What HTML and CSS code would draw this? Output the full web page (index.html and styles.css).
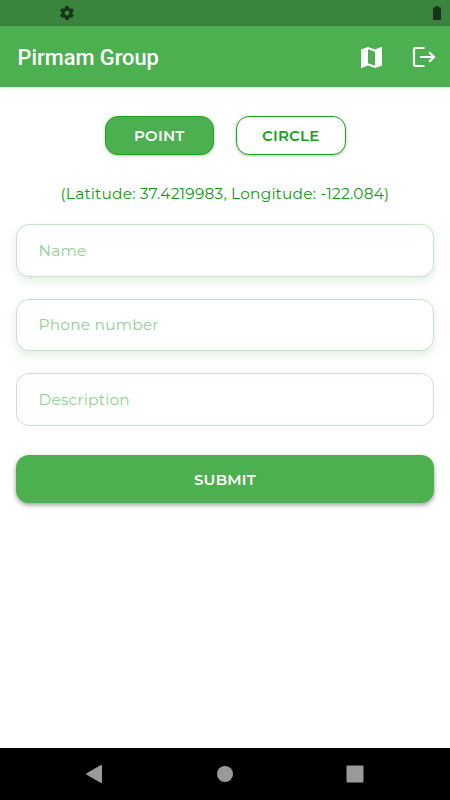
FILE: index.html
```html
<!DOCTYPE html>
<html lang="en">
<head>
  <meta charset="UTF-8">
  <title>Pirmam Group</title>
  <meta name="viewport" content="width=device-width, initial-scale=1.0">
  <link rel="stylesheet" href="styles.css">
</head>
<body>

<div class="status-bar">
  <svg class="gear" viewBox="2 2 20 20"><path d="M19.43 12.98c.04-.32.07-.64.07-.98s-.03-.66-.07-.98l2.11-1.65c.19-.15.24-.42.12-.64l-2-3.46c-.12-.22-.39-.3-.61-.22l-2.49 1c-.52-.4-1.08-.73-1.69-.98l-.38-2.65C14.46 2.18 14.25 2 14 2h-4c-.25 0-.46.18-.49.42l-.38 2.65c-.61.25-1.17.59-1.69.98l-2.49-1c-.23-.09-.49 0-.61.22l-2 3.46c-.13.22-.07.49.12.64l2.11 1.65c-.04.32-.07.65-.07.98s.03.66.07.98l-2.11 1.65c-.19.15-.24.42-.12.64l2 3.46c.12.22.39.3.61.22l2.49-1c.52.4 1.08.73 1.69.98l.38 2.65c.03.24.24.42.49.42h4c.25 0 .46-.18.49-.42l.38-2.65c.61-.25 1.17-.59 1.69-.98l2.49 1c.23.09.49 0 .61-.22l2-3.46c.12-.22.07-.49-.12-.64l-2.11-1.65zM12 15.5c-1.93 0-3.5-1.57-3.5-3.5s1.57-3.5 3.5-3.5 3.5 1.57 3.5 3.5-1.57 3.5-3.5 3.5z"/></svg>
  <svg class="battery" viewBox="0 0 8 14"><path d="M2.3 0h3.4v1.4H8V14H0V1.4h2.3z"/></svg>
</div>

<header class="app-bar">
  <h1>Pirmam Group</h1>
  <svg class="map-icon" viewBox="3 3 18 18"><path d="M20.5 3l-.16.03L15 5.1 9 3 3.36 4.9c-.21.07-.36.25-.36.48V20.5c0 .28.22.5.5.5l.16-.03L9 18.9l6 2.1 5.64-1.9c.21-.07.36-.25.36-.48V3.5c0-.28-.22-.5-.5-.5zM15 19l-6-2.11V5l6 2.11V19z"/></svg>
  <svg class="logout-icon" viewBox="0 0 24 22"><path d="M12.5 2H3.2Q2 2 2 3.2v15.6Q2 20 3.2 20h9.3M8 11h14M17.3 6.3L22 11l-4.7 4.7"/></svg>
</header>

<main class="content">
  <div class="shape-buttons">
    <button class="shape active">POINT</button>
    <button class="shape">CIRCLE</button>
  </div>
  <p class="coords">(Latitude: 37.4219983, Longitude: -122.084)</p>
  <form class="form">
    <input class="raised" type="text" placeholder="Name">
    <input class="raised" type="text" placeholder="Phone number">
    <input type="text" placeholder="Description">
    <button class="submit" type="button">SUBMIT</button>
  </form>
</main>

<nav class="nav-bar">
  <svg viewBox="0 0 20 20"><path d="M2.7 9.2L16.5 1.2Q18 .6 18 2v16q0 1.4-1.5.8L2.7 10.8Q1.5 10 2.7 9.2z"/></svg>
  <svg viewBox="0 0 20 20"><circle cx="10" cy="10" r="8"/></svg>
  <svg viewBox="0 0 20 20"><rect x="1.5" y="1.5" width="17" height="17" rx="1"/></svg>
</nav>

</body>
</html>
```
FILE: styles.css
```css
* {
  margin: 0;
  padding: 0;
  box-sizing: border-box;
}

body {
  font-family: Montserrat, Inter, sans-serif;
  background-color: #fff;
  height: 100vh;
  display: flex;
  flex-direction: column;
  overflow: hidden;
}

svg {
  display: block;
}

.status-bar {
  height: 26px;
  background-color: #3b843e;
  display: flex;
  align-items: center;
  justify-content: space-between;
  padding: 0 9px 0 60px;
  fill: #173419;
}

.gear {
  width: 14px;
  height: 14px;
}

.battery {
  width: 8px;
  height: 14px;
}

.app-bar {
  height: 61px;
  background-color: #4caf50;
  color: #fff;
  display: flex;
  align-items: center;
  padding: 1px 14px 0 17.5px;
  box-shadow: 0 1px 4px rgba(0, 0, 0, 0.12);
}

h1 {
  font-family: Roboto, sans-serif;
  font-size: 21.8px;
  font-weight: 500;
  line-height: 26px;
  padding-top: 1px;
  margin-right: auto;
}

.map-icon {
  width: 21px;
  height: 21px;
  margin-right: 30px;
  fill: #fff;
}

.logout-icon {
  width: 24px;
  height: 22px;
  fill: none;
  stroke: #fff;
  stroke-width: 2.2;
}

.content {
  flex: 1;
  padding: 29px 16px 0;
}

button {
  font-family: inherit;
  font-size: 15px;
  font-weight: 600;
  letter-spacing: 0.2px;
  cursor: pointer;
}

.shape-buttons {
  display: flex;
  justify-content: center;
  gap: 22px;
}

.shape {
  width: 109.5px;
  height: 39px;
  border: 1px solid #18a51c;
  border-radius: 13px;
  background-color: #fff;
  color: #16a01a;
  box-shadow: 0 1px 3px rgba(0, 0, 0, 0.25);
}

.shape.active {
  background-color: #4caf50;
  color: #fff;
}

.coords {
  margin-top: 29px;
  text-align: center;
  font-size: 15.4px;
  line-height: 20px;
  letter-spacing: 0.2px;
  color: #0f9913;
  white-space: nowrap;
}

.form {
  display: flex;
  flex-direction: column;
  gap: 22px;
  margin-top: 20px;
}

input {
  width: 100%;
  height: 52.5px;
  padding: 0 21.5px;
  border: 1px solid #c3e4c5;
  border-radius: 13px;
  background-color: #fff;
  font-family: inherit;
  font-size: 15.4px;
  letter-spacing: 0.2px;
  outline: none;
}

.raised {
  box-shadow: 0 4px 8px rgba(46, 125, 50, 0.14);
}

::placeholder {
  color: #8fd093;
}

.submit {
  height: 48.5px;
  margin-top: 7px;
  padding-top: 1px;
  border: none;
  border-radius: 13px;
  background-color: #4caf50;
  color: #fff;
  box-shadow: 0 2px 5px rgba(0, 0, 0, 0.4);
}

.nav-bar {
  height: 52px;
  background-color: #000;
  display: flex;
  align-items: center;
  justify-content: space-between;
  padding: 0 85px 0 84px;
  fill: #9a9a9a;
}

.nav-bar svg {
  width: 20px;
  height: 20px;
}
```
